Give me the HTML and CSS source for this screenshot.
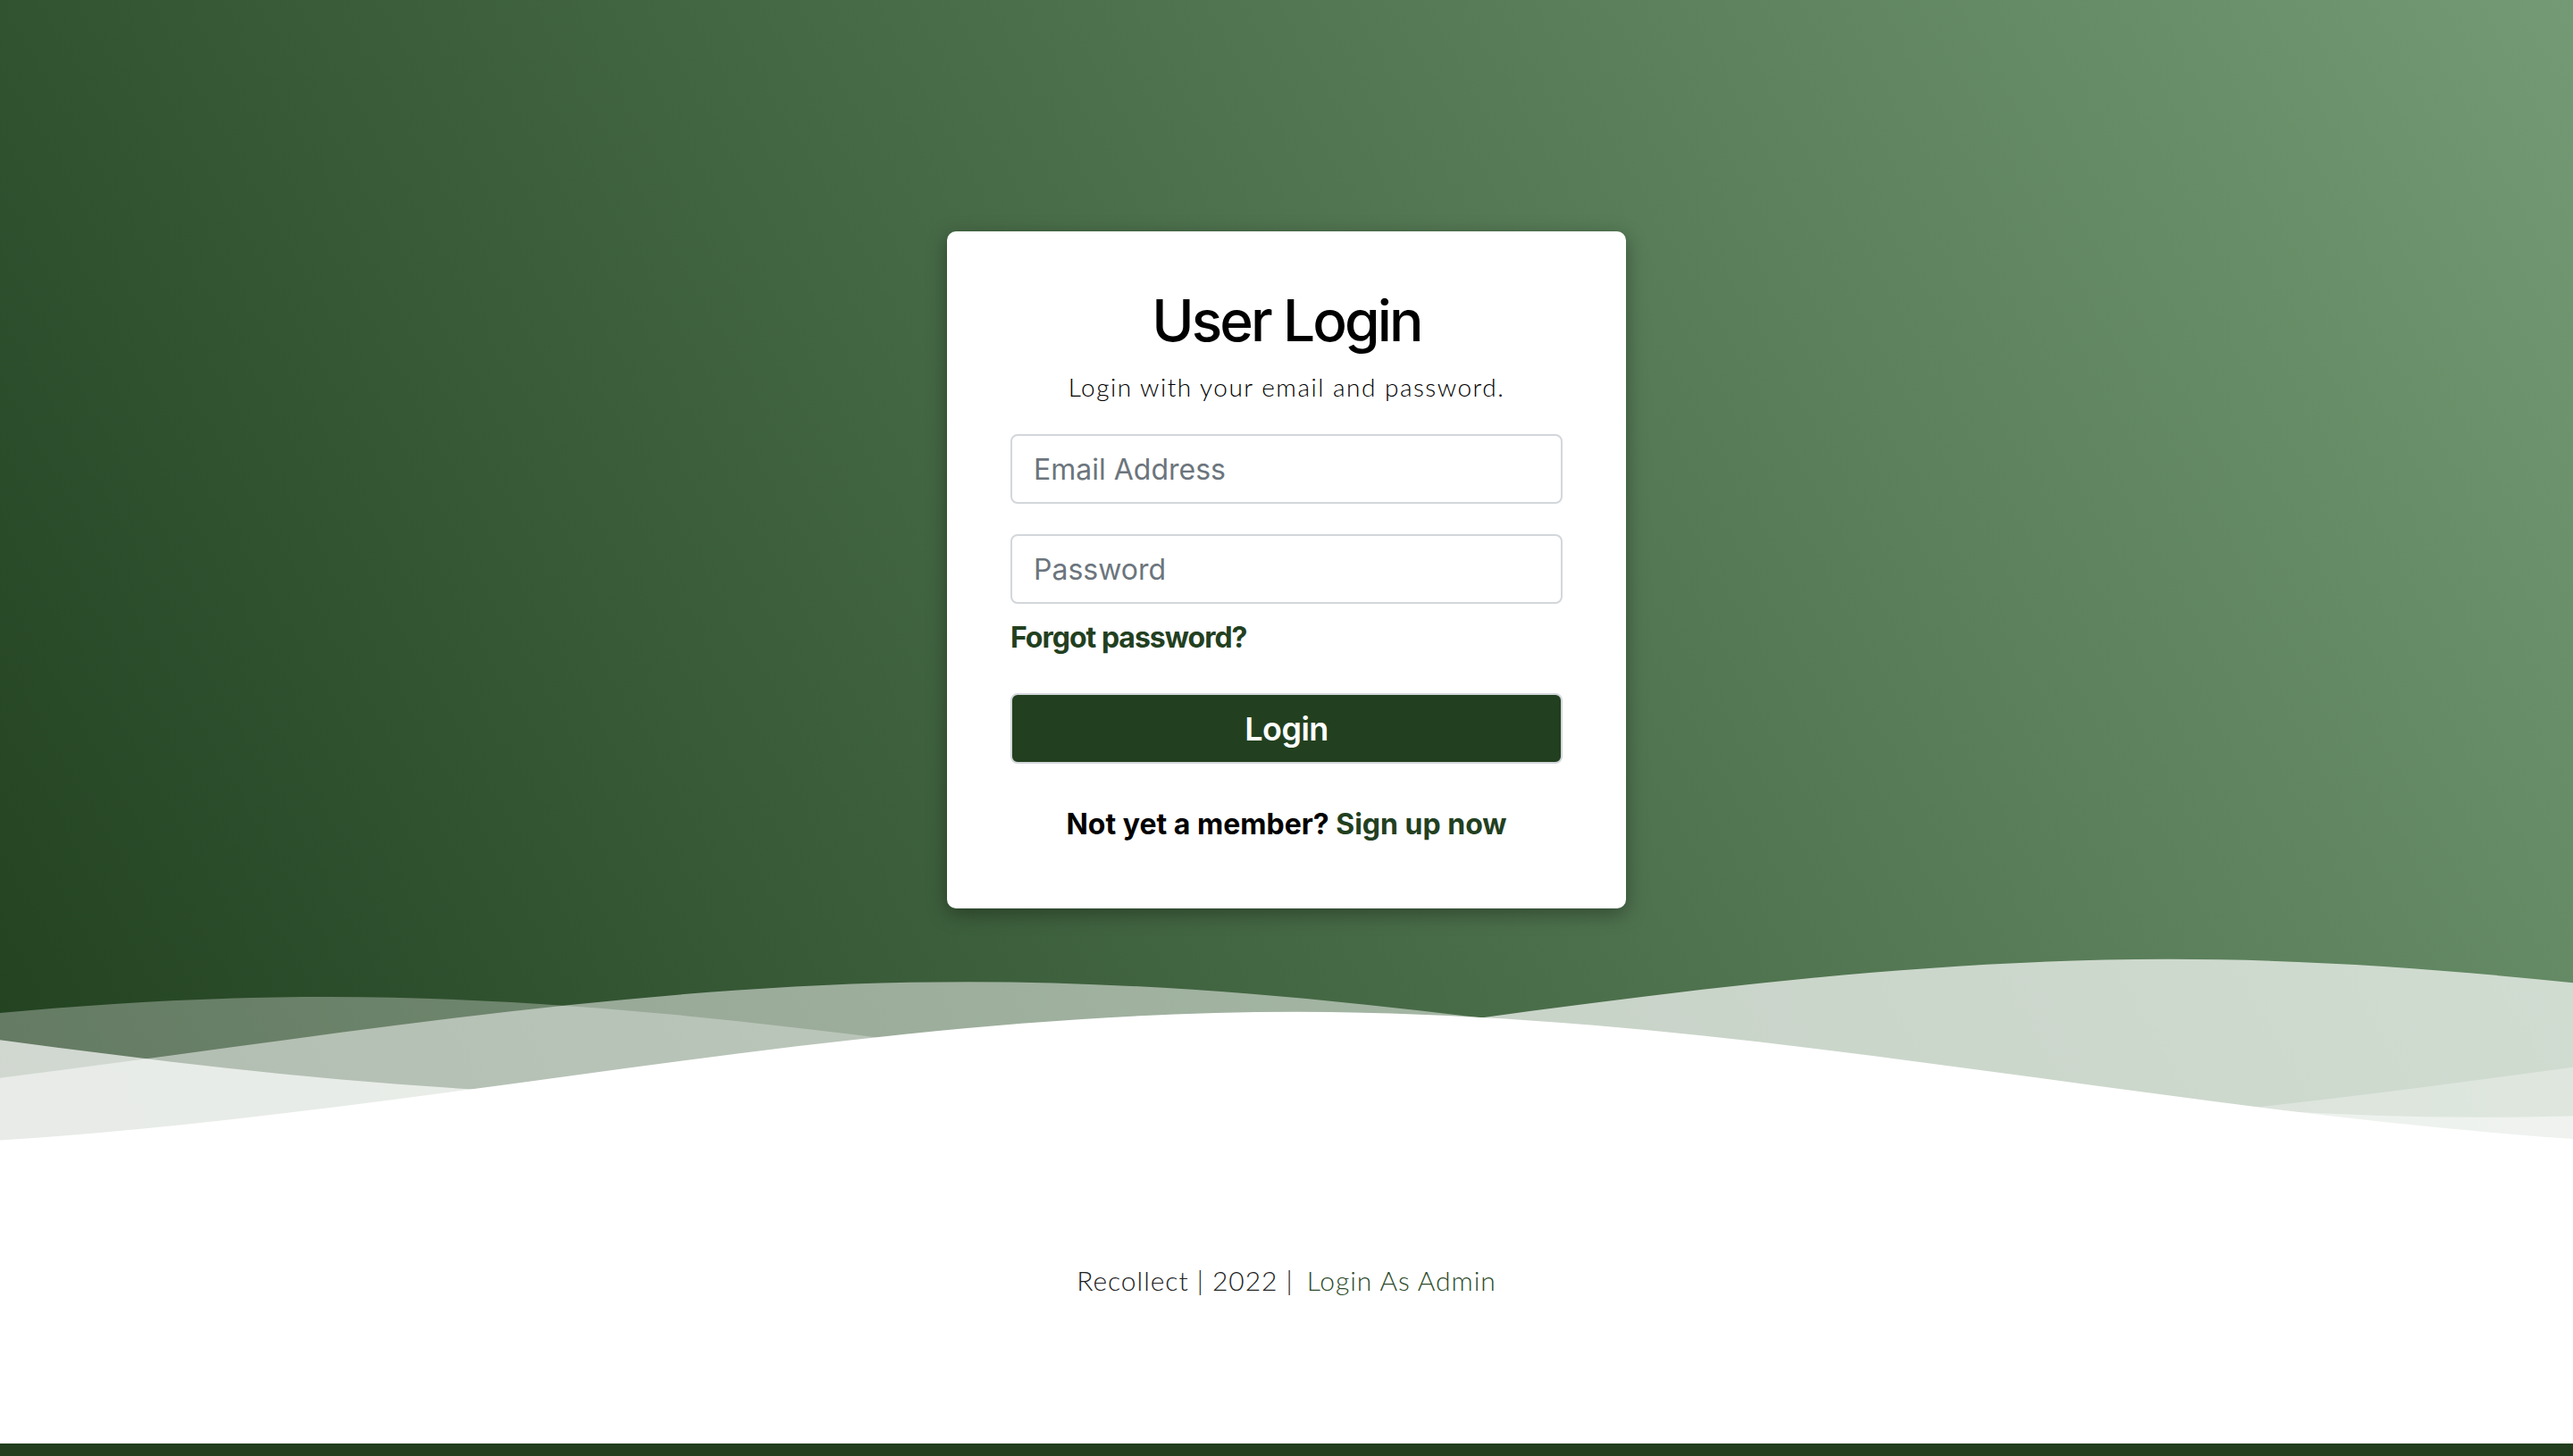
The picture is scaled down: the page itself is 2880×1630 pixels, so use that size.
FILE: index.html
```html
<!DOCTYPE html>
<html lang="en">
<head>
<meta charset="utf-8">
<title>User Login</title>
<link rel="stylesheet" href="styles.css">
</head>
<body>
<header class="hero">
  <div class="hero-inner">
    <form class="card">
      <h2 class="title">User Login</h2>
      <p class="subtitle">Login with your email and password.</p>
      <input class="field" type="email" placeholder="Email Address">
      <input class="field field-gap" type="password" placeholder="Password">
      <a class="forgot" href="#">Forgot password?</a>
      <button class="btn" type="button">Login</button>
      <p class="signup">Not yet a member? <a href="#" class="signup-link">Sign up now</a></p>
    </form>
  </div>
  <svg class="waves" viewBox="0 24 150 28" preserveAspectRatio="none" xmlns="http://www.w3.org/2000/svg">
    <defs>
      <path id="gentle-wave" d="M-352 44c30 0 58-18 88-18s58 18 88 18 58-18 88-18 58 18 88 18 58-18 88-18 58 18 88 18 58-18 88-18 58 18 88 18v44h-704z"/>
    </defs>
    <g>
      <use href="#gentle-wave" x="38.4" y="0" fill="rgba(255,255,255,0.7)"/>
      <use href="#gentle-wave" x="-31.5" y="3" fill="rgba(255,255,255,0.5)"/>
      <use href="#gentle-wave" x="-68.9" y="5" fill="rgba(255,255,255,0.3)"/>
      <use href="#gentle-wave" x="-12.4" y="7" fill="#fff"/>
    </g>
  </svg>
</header>
<section class="content">
  <p class="footer-text">Recollect | 2022 | <a href="#" class="admin-link">Login As Admin</a></p>
</section>
<div class="bottom-bar"></div>
</body>
</html>
```
FILE: styles.css
```css
* { box-sizing: border-box; }

html, body {
  margin: 0;
  padding: 0;
  background: #fff;
}

body {
  font-family: Inter, "Noto Sans", sans-serif;
  height: 1630px;
  overflow: hidden;
}

.hero {
  background: linear-gradient(60deg, #21411f 0%, #739a74 100%);
}

.hero-inner {
  height: 1057px;
  padding-top: 259px;
  display: flex;
  justify-content: center;
  align-items: flex-start;
}

.card {
  width: 760px;
  height: 758px;
  background: #fff;
  border-radius: 10px;
  box-shadow: 0 6px 22px rgba(0, 0, 0, 0.35);
  padding: 61px 71px 0;
  display: flex;
  flex-direction: column;
  align-items: stretch;
}

.title {
  margin: 0;
  font-family: Inter, sans-serif;
  font-weight: 500;
  font-size: 64px;
  line-height: 77px;
  letter-spacing: -2.9px;
  text-align: center;
  color: #000;
}

.subtitle {
  margin: 15px 0 0;
  font-family: Lato, sans-serif;
  font-weight: 300;
  font-size: 28px;
  line-height: 42px;
  letter-spacing: 1.5px;
  text-align: center;
  color: #000;
}

.field {
  display: block;
  width: 100%;
  height: 78px;
  margin-top: 32px;
  padding: 0 24px;
  border: 2px solid #d3d7db;
  border-radius: 8px;
  font-family: Inter, sans-serif;
  font-size: 32px;
  color: #212529;
  background: #fff;
  outline: none;
}

.field-gap { margin-top: 34px; }

.field::placeholder { color: #6c757d; }

.forgot {
  margin-top: 14px;
  font-family: Inter, sans-serif;
  font-weight: 700;
  font-size: 32px;
  line-height: 48px;
  letter-spacing: -1px;
  color: #22401f;
  text-decoration: none;
  align-self: flex-start;
}

.btn {
  margin-top: 38px;
  height: 79px;
  width: 100%;
  background: #22401f;
  border: 2px solid #d3d7db;
  border-radius: 8px;
  color: #fff;
  font-family: Inter, sans-serif;
  font-weight: 600;
  font-size: 36px;
  letter-spacing: -0.5px;
  cursor: pointer;
}

.signup {
  margin: 44px 0 0;
  font-family: Inter, sans-serif;
  font-weight: 700;
  font-size: 32px;
  line-height: 48px;
  text-align: center;
  color: #000;
}

.signup-link {
  color: #22401f;
  text-decoration: none;
}

.waves {
  display: block;
  width: 100%;
  height: 236px;
}

.content {
  height: 323px;
  padding-top: 118px;
  background: #fff;
}

.footer-text {
  margin: 0;
  font-family: Lato, sans-serif;
  font-weight: 300;
  font-size: 30px;
  line-height: 45px;
  letter-spacing: 0.95px;
  text-align: center;
  color: #222;
}

.admin-link {
  margin-left: 6px;
  color: #2c4a29;
  text-decoration: none;
}

.bottom-bar {
  height: 14px;
  background: #213d1e;
}
```
